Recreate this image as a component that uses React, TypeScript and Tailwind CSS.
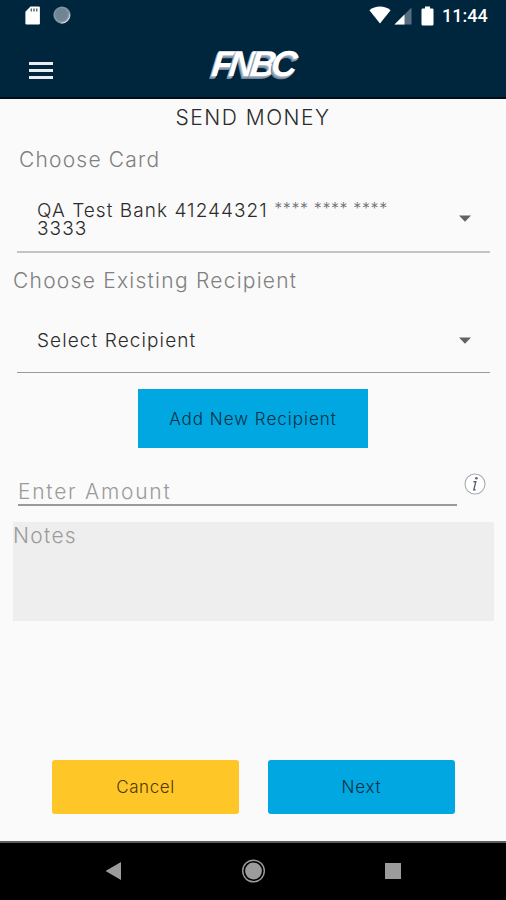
import { useState, type ReactNode } from 'react';

interface SelectRowProps {
  children: ReactNode;
  className: string;
}

function SelectRow({ children, className }: SelectRowProps) {
  return (
    <button
      className={`ml-[17px] flex w-[473px] items-center justify-between pl-[20px] pr-[19px] text-left text-[19px] leading-[18px] text-[#2b2b2b] ${className}`}
    >
      <span className="w-[360px]">{children}</span>
      <svg className="h-[7px] w-[12px]" viewBox="0 0 12 7" fill="#636363">
        <path d="M0 0.5h12L6 6.8z" />
      </svg>
    </button>
  );
}

function StatusBar() {
  return (
    <div className="flex h-[32px] items-center bg-[#00263e] pl-[24px] pr-[18px]">
      <svg className="h-[20px] w-[17px]" viewBox="0 0 17 20">
        <path d="M6.5 0.5h8.2q1.2 0 1.2 1.2v15.6q0 1.2-1.2 1.2H2.6q-1.2 0-1.2-1.2V5.7z" fill="#fff" />
        <path d="M7.3 2.5v3M10 2.5v3M12.7 2.5v3" stroke="#5d6b75" strokeWidth="1.5" />
      </svg>
      <svg className="ml-[12px] mt-[-2px] h-[18px] w-[18px]" viewBox="0 0 18 18">
        <circle cx="9" cy="9" r="8.6" fill="#8296a3" />
        <path d="M16.6 6.5a8.4 8.4 0 0 1-10 10.6A9.5 9.5 0 0 0 16.6 6.5z" fill="#e4e9ec" />
        <circle cx="8.4" cy="8.4" r="6.4" fill="#6f8594" />
      </svg>
      <div className="ml-auto flex items-center">
        <svg className="mt-[-2px] h-[18px] w-[22px]" viewBox="0 0 22 18" fill="#fff">
          <path d="M11 17.5 0.4 4.3Q5 0.6 11 0.6T21.6 4.3z" />
        </svg>
        <svg className="ml-[3px] h-[18px] w-[18px]" viewBox="0 0 18 18">
          <path d="M17.5 0.5v17H0.5z" fill="#566f80" />
          <path d="M10.5 7.5v10h-10z" fill="#fff" />
        </svg>
        <svg className="ml-[9px] mt-[-1px] h-[20px] w-[13px]" viewBox="0 0 13 20" fill="#fff">
          <path d="M4 0.5h5v2h2.2q1.3 0 1.3 1.3v14.4q0 1.3-1.3 1.3H1.8q-1.3 0-1.3-1.3V3.8q0-1.3 1.3-1.3H4z" />
        </svg>
        <span className="ml-[8px] w-[46px] whitespace-nowrap font-[Roboto] text-[18px] font-medium leading-[20px] text-white">
          11:44
        </span>
      </div>
    </div>
  );
}

function Header() {
  return (
    <header className="grid h-[67px] grid-cols-[1fr_auto_1fr] items-start border-b-2 border-[#000d18] bg-[#00263e]">
      <button aria-label="Menu" className="ml-[29px] mt-[30px] flex w-[24px] flex-col gap-[4px]">
        <span className="h-[3px] w-full bg-[#eceaf2]" />
        <span className="h-[3px] w-full bg-[#eceaf2]" />
        <span className="h-[3px] w-full bg-[#eceaf2]" />
      </button>
      {/* one span per letter so each shadow falls on the letter before it */}
      <div className="mt-[14px] w-[83px] -skew-x-6 whitespace-nowrap font-['Liberation_Sans',sans-serif] text-[36px] font-bold italic leading-[36px] tracking-[-4.8px] text-white [text-shadow:-1px_1px_0_#a9b6c2,-1px_2px_0_#8d9cab,-2px_3px_0_#75889a]">
        <span>F</span>
        <span>N</span>
        <span>B</span>
        <span>C</span>
      </div>
    </header>
  );
}

function NavBar() {
  return (
    <nav className="flex h-[59px] items-center justify-between border-t-2 border-[#5e5e5e] bg-black pb-[2px] pl-[105px] pr-[105px]">
      <svg className="h-[18px] w-[17px]" viewBox="0 0 17 18" fill="#9b9b9b">
        <path d="M16 0v18L0.5 9z" />
      </svg>
      <svg className="h-[24px] w-[24px]" viewBox="0 0 24 24">
        <circle cx="11.5" cy="12" r="10.8" fill="none" stroke="#9b9b9b" strokeWidth="1.4" />
        <circle cx="11.5" cy="12" r="8.4" fill="#9b9b9b" />
      </svg>
      <span className="h-[16px] w-[16px] bg-[#9b9b9b]" />
    </nav>
  );
}

export default function App() {
  const [amount, setAmount] = useState('');
  const [notes, setNotes] = useState('');

  return (
    <div className="flex h-[900px] w-[506px] flex-col overflow-hidden bg-[#fafafa] font-[Inter,sans-serif] font-light">
      <StatusBar />
      <Header />

      <main className="flex flex-1 flex-col">
        <h1 className="mt-[6px] text-center text-[21px] leading-[26px] tracking-[1.5px] text-[#2b2b2b]">
          SEND MONEY
        </h1>

        <p className="ml-[19px] mt-[16px] text-[21px] leading-[26px] tracking-[1.2px] text-[#808080]">Choose Card</p>
        <SelectRow className="mt-[13px] h-[67px] border-b-2 border-[#c4c4c4] tracking-[1.05px]">
          QA Test Bank 41244321{' '}
          <span className="align-[3px] text-[16px] leading-none tracking-[0.6px] text-[#6b6b6b]">**** **** ****</span> 3333
        </SelectRow>

        <p className="ml-[13px] mt-[15px] text-[21px] leading-[26px] tracking-[1.25px] text-[#808080]">
          Choose Existing Recipient
        </p>
        <SelectRow className="mt-[14px] h-[65px] border-b border-[#9a9a9a] pt-[1px] tracking-[1.1px]">
          Select Recipient
        </SelectRow>

        <button className="ml-[138px] mt-[16px] h-[59px] w-[230px] bg-[#00a7e1] pt-[2px] text-[17px] tracking-[1px] text-[#0a3142]">
          Add New Recipient
        </button>

        <div className="ml-[18px] mt-[24px] flex h-[34px] items-start">
          <input
            type="text"
            placeholder="Enter Amount"
            className="h-[34px] w-[439px] border-b-2 border-[#9a9a9a] pt-[7px] text-[21px] tracking-[1.75px] outline-none placeholder:text-[#9b9b9b]"
            value={amount}
            onChange={(e) => setAmount(e.target.value)}
          />
          <svg className="ml-[7px] mt-[1px] h-[22px] w-[22px]" viewBox="0 0 22 22">
            <circle cx="11" cy="11" r="10" fill="#fff" stroke="#a9abb0" strokeWidth="1.1" />
            <circle cx="12.4" cy="5.2" r="1.3" fill="#5c5f78" />
            <path d="M9.4 8.8h2.4L9.8 16.8h1.8" fill="none" stroke="#5c5f78" strokeWidth="1.4" />
          </svg>
        </div>

        <textarea
          placeholder="Notes"
          className="ml-[13px] mt-[16px] h-[99px] w-[481px] resize-none bg-[#eeeeee] pt-[1px] text-[21px] leading-[26px] tracking-[1.3px] outline-none placeholder:text-[#9b9b9b]"
          value={notes}
          onChange={(e) => setNotes(e.target.value)}
        />

        <div className="mb-[27px] ml-[52px] mt-auto flex gap-[29px] text-[17px]">
          <button className="h-[54px] w-[187px] rounded-[3px] bg-[#ffc627] pt-[2px] tracking-[0.6px] text-[#4b3a0b]">Cancel</button>
          <button className="h-[54px] w-[187px] rounded-[3px] bg-[#00a7e1] pt-[2px] tracking-[0.8px] text-[#0a3142]">Next</button>
        </div>
      </main>

      <NavBar />
    </div>
  );
}
